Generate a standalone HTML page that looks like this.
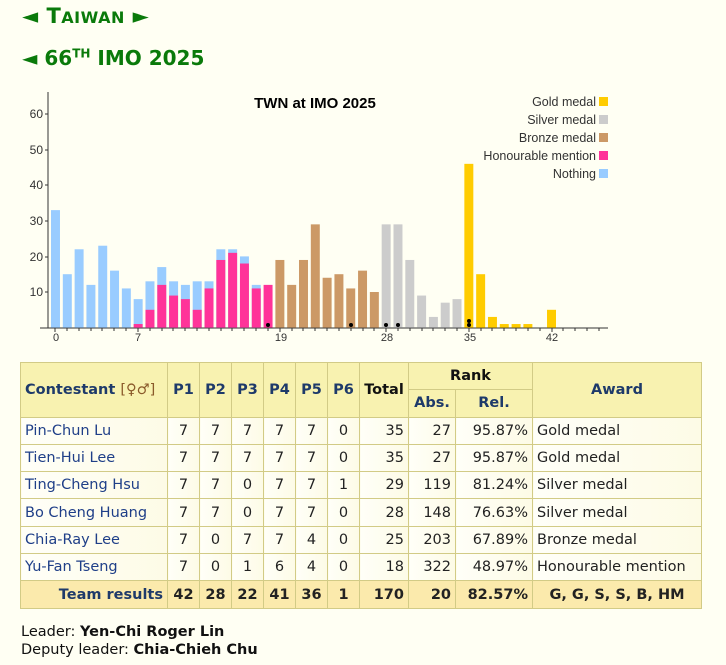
<!DOCTYPE html>
<html><head><meta charset="utf-8"><style>
body{margin:0;background:#fffff3;font-family:"DejaVu Sans",Verdana,sans-serif;width:726px;height:665px;overflow:hidden;position:relative}
.h{position:absolute;color:#0a7a0a;font-weight:bold;left:22px;margin:0}
table{position:absolute;left:20px;top:362px;border-collapse:collapse;table-layout:fixed;font-size:14.5px}
td,th{border:1px solid #d2cb86;padding:0 4px;height:26.3px;white-space:nowrap;overflow:hidden}
th{background:#f8f2b0;color:#1e3a6a}
td{background:linear-gradient(90deg,#fffff8,#fdfbe6);color:#222;text-align:right}
td.c{text-align:center}
td.n{text-align:left;color:#1f3f88}
td.a{text-align:left}
tr.t td{background:#fbeaac;font-weight:bold;color:#222}
.foot{position:absolute;left:21px;font-size:14.5px;color:#111}
</style></head><body>
<div class="h" style="top:4px;font-size:21px;letter-spacing:0.5px">◄ T<span style="font-size:16px">AIWAN</span> ►</div>
<div class="h" style="top:46px;font-size:20px">◄ 66<sup style="font-size:12px">TH</sup> IMO 2025</div>
<svg style="position:absolute;left:0;top:0" width="726" height="360">
<g font-family="Liberation Sans,Arial,sans-serif" font-size="12" fill="#333" text-anchor="end">
<text x="43" y="118">60</text><text x="43" y="154">50</text><text x="43" y="189">40</text><text x="43" y="225">30</text><text x="43" y="261">20</text><text x="43" y="296">10</text>
</g>
<line x1="48" y1="92" x2="48" y2="328" stroke="#333"/>
<g stroke="#333"><line x1="45" y1="114" x2="48" y2="114"/><line x1="45" y1="150" x2="48" y2="150"/><line x1="45" y1="185" x2="48" y2="185"/><line x1="45" y1="221" x2="48" y2="221"/><line x1="45" y1="257" x2="48" y2="257"/><line x1="45" y1="292" x2="48" y2="292"/></g>
<line x1="40" y1="328" x2="608" y2="328" stroke="#333"/>
<g transform="translate(51,327.6) scale(11.81,-3.56)">
<g fill="#99ccff"><rect x="0" width=".76" height="33"/><rect x="1" width=".76" height="15"/><rect x="2" width=".76" height="22"/><rect x="3" width=".76" height="12"/><rect x="4" width=".76" height="23"/><rect x="5" width=".76" height="16"/><rect x="6" width=".76" height="11"/><rect x="7" width=".76" height="8"/><rect x="8" width=".76" height="13"/><rect x="9" width=".76" height="17"/><rect x="10" width=".76" height="13"/><rect x="11" width=".76" height="12"/><rect x="12" width=".76" height="13"/><rect x="13" width=".76" height="13"/><rect x="14" width=".76" height="22"/><rect x="15" width=".76" height="22"/><rect x="16" width=".76" height="20"/><rect x="17" width=".76" height="12"/></g>
<g fill="#ff3399"><rect x="7" width=".76" height="1"/><rect x="8" width=".76" height="5"/><rect x="9" width=".76" height="12"/><rect x="10" width=".76" height="9"/><rect x="11" width=".76" height="8"/><rect x="12" width=".76" height="5"/><rect x="13" width=".76" height="11"/><rect x="14" width=".76" height="19"/><rect x="15" width=".76" height="21"/><rect x="16" width=".76" height="18"/><rect x="17" width=".76" height="11"/><rect x="18" width=".76" height="12"/></g>
<g fill="#cc9966"><rect x="19" width=".76" height="19"/><rect x="20" width=".76" height="12"/><rect x="21" width=".76" height="19"/><rect x="22" width=".76" height="29"/><rect x="23" width=".76" height="14"/><rect x="24" width=".76" height="15"/><rect x="25" width=".76" height="11"/><rect x="26" width=".76" height="16"/><rect x="27" width=".76" height="10"/></g>
<g fill="#cccccc"><rect x="28" width=".76" height="29"/><rect x="29" width=".76" height="29"/><rect x="30" width=".76" height="19"/><rect x="31" width=".76" height="9"/><rect x="32" width=".76" height="3"/><rect x="33" width=".76" height="7"/><rect x="34" width=".76" height="8"/></g>
<g fill="#ffcc00"><rect x="35" width=".76" height="46"/><rect x="36" width=".76" height="15"/><rect x="37" width=".76" height="3"/><rect x="38" width=".76" height="1"/><rect x="39" width=".76" height="1"/><rect x="40" width=".76" height="1"/><rect x="42" width=".76" height="5"/></g>
</g>
<g fill="#000"><circle cx="268" cy="325" r="2"/><circle cx="351" cy="325" r="2"/><circle cx="386" cy="325" r="2"/><circle cx="398" cy="325" r="2"/><circle cx="469" cy="325" r="2"/><circle cx="469" cy="321" r="2"/></g>
<g stroke="#333"><path d="M55 328v4M67 328v3M79 328v3M91 328v3M102 328v3M114 328v3M126 328v3M138 328v4M150 328v3M162 328v3M173 328v3M185 328v3M197 328v3M209 328v3M221 328v3M232 328v3M244 328v3M256 328v3M268 328v3M280 328v4M292 328v3M303 328v3M315 328v3M327 328v3M339 328v3M351 328v3M363 328v3M374 328v3M386 328v4M398 328v3M410 328v3M422 328v3M433 328v3M445 328v3M457 328v3M469 328v4M481 328v3M492 328v3M504 328v3M516 328v3M528 328v3M540 328v3M552 328v4M563 328v3M575 328v3M587 328v3M599 328v3"/></g>
<g font-family="Liberation Sans,Arial,sans-serif" font-size="11" fill="#333" text-anchor="middle"><text x="56" y="341">0</text><text x="138" y="341">7</text><text x="281" y="341">19</text><text x="387" y="341">28</text><text x="470" y="341">35</text><text x="552" y="341">42</text></g>
<text x="315" y="108" font-family="Liberation Sans,Arial,sans-serif" font-size="15" font-weight="bold" text-anchor="middle">TWN at IMO 2025</text>
<g font-family="Liberation Sans,Arial,sans-serif" font-size="12.5" fill="#333" text-anchor="end"><text x="596" y="106">Gold medal</text><text x="596" y="124">Silver medal</text><text x="596" y="142">Bronze medal</text><text x="596" y="160">Honourable mention</text><text x="596" y="178">Nothing</text></g>
<rect x="599" y="97" width="9" height="9" fill="#ffcc00"/><rect x="599" y="115" width="9" height="9" fill="#cccccc"/><rect x="599" y="133" width="9" height="9" fill="#cc9966"/><rect x="599" y="151" width="9" height="9" fill="#ff3399"/><rect x="599" y="169" width="9" height="9" fill="#99ccff"/>
</svg>
<table>
<colgroup><col style="width:147px"><col style="width:32px"><col style="width:32px"><col style="width:32px"><col style="width:32px"><col style="width:32px"><col style="width:32px"><col style="width:49px"><col style="width:47px"><col style="width:77px"><col style="width:169px"></colgroup>
<tr><th rowspan="2" style="text-align:left">Contestant <span style="font-weight:normal;color:#8a5a2a">[♀♂]</span></th><th rowspan="2">P1</th><th rowspan="2">P2</th><th rowspan="2">P3</th><th rowspan="2">P4</th><th rowspan="2">P5</th><th rowspan="2">P6</th><th rowspan="2" style="color:#111">Total</th><th colspan="2" style="color:#111">Rank</th><th rowspan="2">Award</th></tr>
<tr><th>Abs.</th><th>Rel.</th></tr>
<tr><td class="n">Pin-Chun Lu</td><td class="c">7</td><td class="c">7</td><td class="c">7</td><td class="c">7</td><td class="c">7</td><td class="c">0</td><td>35</td><td>27</td><td>95.87%</td><td class="a">Gold medal</td></tr>
<tr><td class="n">Tien-Hui Lee</td><td class="c">7</td><td class="c">7</td><td class="c">7</td><td class="c">7</td><td class="c">7</td><td class="c">0</td><td>35</td><td>27</td><td>95.87%</td><td class="a">Gold medal</td></tr>
<tr><td class="n">Ting-Cheng Hsu</td><td class="c">7</td><td class="c">7</td><td class="c">0</td><td class="c">7</td><td class="c">7</td><td class="c">1</td><td>29</td><td>119</td><td>81.24%</td><td class="a">Silver medal</td></tr>
<tr><td class="n">Bo Cheng Huang</td><td class="c">7</td><td class="c">7</td><td class="c">0</td><td class="c">7</td><td class="c">7</td><td class="c">0</td><td>28</td><td>148</td><td>76.63%</td><td class="a">Silver medal</td></tr>
<tr><td class="n">Chia-Ray Lee</td><td class="c">7</td><td class="c">0</td><td class="c">7</td><td class="c">7</td><td class="c">4</td><td class="c">0</td><td>25</td><td>203</td><td>67.89%</td><td class="a">Bronze medal</td></tr>
<tr><td class="n">Yu-Fan Tseng</td><td class="c">7</td><td class="c">0</td><td class="c">1</td><td class="c">6</td><td class="c">4</td><td class="c">0</td><td>18</td><td>322</td><td>48.97%</td><td class="a">Honourable mention</td></tr>
<tr class="t"><td style="color:#1e3a6a">Team results</td><td class="c">42</td><td class="c">28</td><td class="c">22</td><td class="c">41</td><td class="c">36</td><td class="c">1</td><td>170</td><td>20</td><td>82.57%</td><td style="text-align:center">G, G, S, S, B, HM</td></tr>
</table>
<div class="foot" style="top:624px">Leader: <b>Yen-Chi Roger Lin</b></div>
<div class="foot" style="top:642px">Deputy leader: <b>Chia-Chieh Chu</b></div>
</body></html>
